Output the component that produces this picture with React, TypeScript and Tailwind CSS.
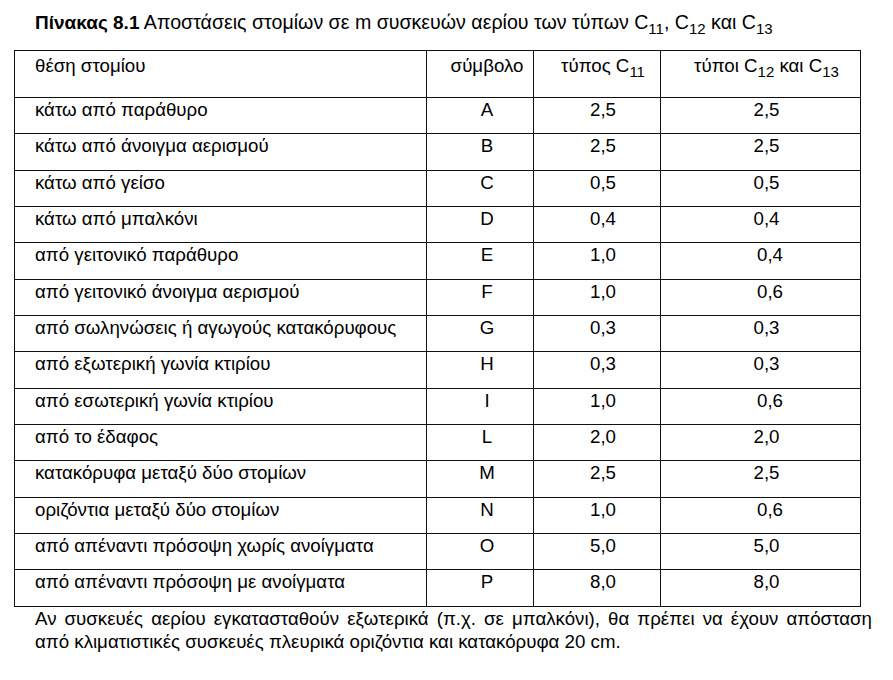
import React from "react";

const rows: [string, string, string, string, boolean?][] = [
  ["κάτω από παράθυρο", "A", "2,5", "2,5"],
  ["κάτω από άνοιγμα αερισμού", "B", "2,5", "2,5"],
  ["κάτω από γείσο", "C", "0,5", "0,5"],
  ["κάτω από μπαλκόνι", "D", "0,4", "0,4"],
  ["από γειτονικό παράθυρο", "E", "1,0", "0,4", true],
  ["από γειτονικό άνοιγμα αερισμού", "F", "1,0", "0,6", true],
  ["από σωληνώσεις ή αγωγούς κατακόρυφους", "G", "0,3", "0,3"],
  ["από εξωτερική γωνία κτιρίου", "H", "0,3", "0,3"],
  ["από εσωτερική γωνία κτιρίου", "I", "1,0", "0,6", true],
  ["από το έδαφος", "L", "2,0", "2,0"],
  ["κατακόρυφα μεταξύ δύο στομίων", "M", "2,5", "2,5"],
  ["οριζόντια μεταξύ δύο στομίων", "N", "1,0", "0,6", true],
  ["από απέναντι πρόσοψη χωρίς ανοίγματα", "O", "5,0", "5,0"],
  ["από απέναντι πρόσοψη με ανοίγματα", "P", "8,0", "8,0"],
];

function Sub({ children }: { children: React.ReactNode }) {
  return <span className="relative top-[5px] text-[15px]">{children}</span>;
}

export default function App() {
  const cell = "border-[1.5px] border-[#111] align-top";
  return (
    <div
      className="w-[893px] h-[680px] bg-white text-black text-[18.7px] leading-[21px]"
      style={{ fontFamily: '"Liberation Sans", Arial, sans-serif' }}
    >
      <div className="pt-[12px] pl-[35px] whitespace-nowrap text-[19.6px]">
        <span className="font-bold text-[19px]">Πίνακας 8.1</span> Αποστάσεις στομίων σε m συσκευών αερίου των τύπων C<Sub>11</Sub>, C<Sub>12</Sub> και C<Sub>13</Sub>
      </div>
      <table className="ml-[14px] mt-[16px] table-fixed border-collapse w-[846px]">
        <colgroup>
          <col className="w-[412px]" />
          <col className="w-[107px]" />
          <col className="w-[127px]" />
          <col className="w-[200px]" />
        </colgroup>
        <tbody>
          <tr className="h-[47px]">
            <td className={`${cell} pl-[20px] pt-[4px]`}>θέση στομίου</td>
            <td className={`${cell} text-center pl-[14px] pt-[4px]`}>σύμβολο</td>
            <td className={`${cell} text-center pl-[12px] pt-[4px]`}>
              τύπος C<Sub>11</Sub>
            </td>
            <td className={`${cell} text-center pl-[12px] pt-[4px]`}>
              τύποι C<Sub>12</Sub> και C<Sub>13</Sub>
            </td>
          </tr>
          {rows.map(([a, b, c, d, shift]) => (
            <tr key={b} className="h-[36.35px]">
              <td className={`${cell} pl-[20px] pt-[1px]`}>{a}</td>
              <td className={`${cell} text-center pl-[14px] pt-[1px]`}>{b}</td>
              <td className={`${cell} text-center pl-[12px] pt-[1px]`}>{c}</td>
              <td className={`${cell} text-center pt-[1px] ${shift ? "pl-[19px]" : "pl-[12px]"}`}>{d}</td>
            </tr>
          ))}
        </tbody>
      </table>
      <div className="ml-[35px] w-[837px] text-justify leading-[23px]">
        Αν συσκευές αερίου εγκατασταθούν εξωτερικά (π.χ. σε μπαλκόνι), θα πρέπει να έχουν απόσταση από κλιματιστικές συσκευές πλευρικά οριζόντια και κατακόρυφα 20 cm.
      </div>
    </div>
  );
}
